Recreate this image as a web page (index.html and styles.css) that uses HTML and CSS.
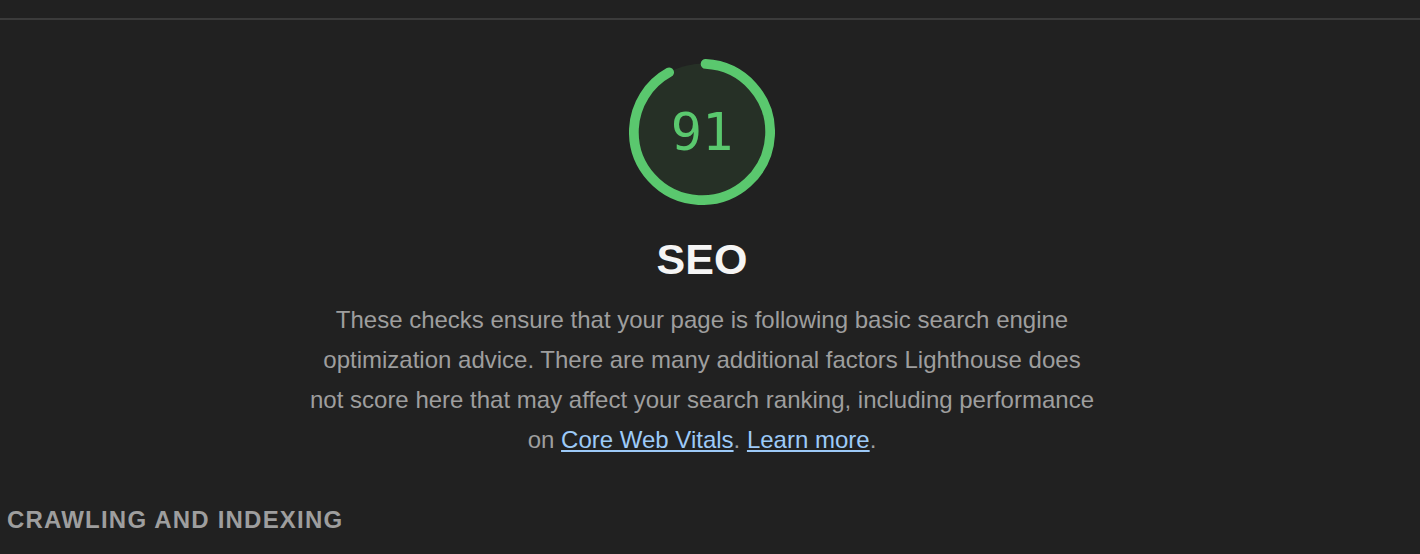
FILE: index.html
```html
<!DOCTYPE html>
<html lang="en">
<head>
<meta charset="utf-8">
<link rel="stylesheet" href="styles.css">
</head>
<body>
<div class="topbar"></div>
<main class="category">
  <div class="header">
    <div class="gauge">
      <svg class="gauge-svg" viewBox="0 0 120 120" width="146" height="146">
        <circle class="gauge-base" cx="60" cy="60" r="56"></circle>
        <circle class="gauge-arc" cx="60" cy="60" r="56" stroke-dasharray="320.2 351.86" transform="rotate(-87 60 60)"></circle>
      </svg>
      <div class="gauge-pct">91</div>
    </div>
    <h1 class="title">SEO</h1>
    <p class="desc">These checks ensure that your page is following basic search engine optimization advice. There are many additional factors Lighthouse does not score here that may affect your search ranking, including performance on <a href="#">Core Web Vitals</a>. <a href="#">Learn more</a>.</p>
  </div>
  <h2 class="group-title">Crawling and Indexing</h2>
</main>
</body>
</html>
```

FILE: styles.css
```css
html, body {
  margin: 0;
  padding: 0;
  background: #212121;
  height: 100%;
}
body {
  font-family: "Liberation Sans", Arial, sans-serif;
  overflow: hidden;
}
.topbar {
  height: 18px;
  border-bottom: 2px solid #3b3b3b;
}
.category {
  width: 1404px;
  display: flex;
  flex-direction: column;
}
.header {
  display: flex;
  flex-direction: column;
  align-items: center;
  padding-top: 39px;
}
.gauge {
  position: relative;
  width: 146px;
  height: 146px;
}
.gauge-svg {
  display: block;
}
.gauge-base {
  fill: #263026;
  stroke: none;
}
.gauge-arc {
  fill: none;
  stroke: #5ac86e;
  stroke-width: 8;
  stroke-linecap: round;
}
.gauge-pct {
  position: absolute;
  inset: 0;
  display: flex;
  align-items: center;
  justify-content: center;
  font-family: "DejaVu Sans Mono", monospace;
  font-size: 52px;
  color: #5ac86e;
  line-height: 1;
}
.title {
  margin: 24px 0 0;
  font-size: 43px;
  font-weight: bold;
  color: #f5f5f5;
  line-height: 60px;
}
.desc {
  margin: 11px 0 0;
  width: 795px;
  text-align: center;
  font-size: 24px;
  line-height: 40px;
  color: #9e9e9e;
}
.desc a {
  color: #9dcaf8;
  text-decoration: underline;
}
.group-title {
  margin: 45px 0 0 7px;
  font-size: 24px;
  font-weight: bold;
  text-transform: uppercase;
  letter-spacing: 1.2px;
  color: #9e9e9e;
  line-height: 30px;
}
```
